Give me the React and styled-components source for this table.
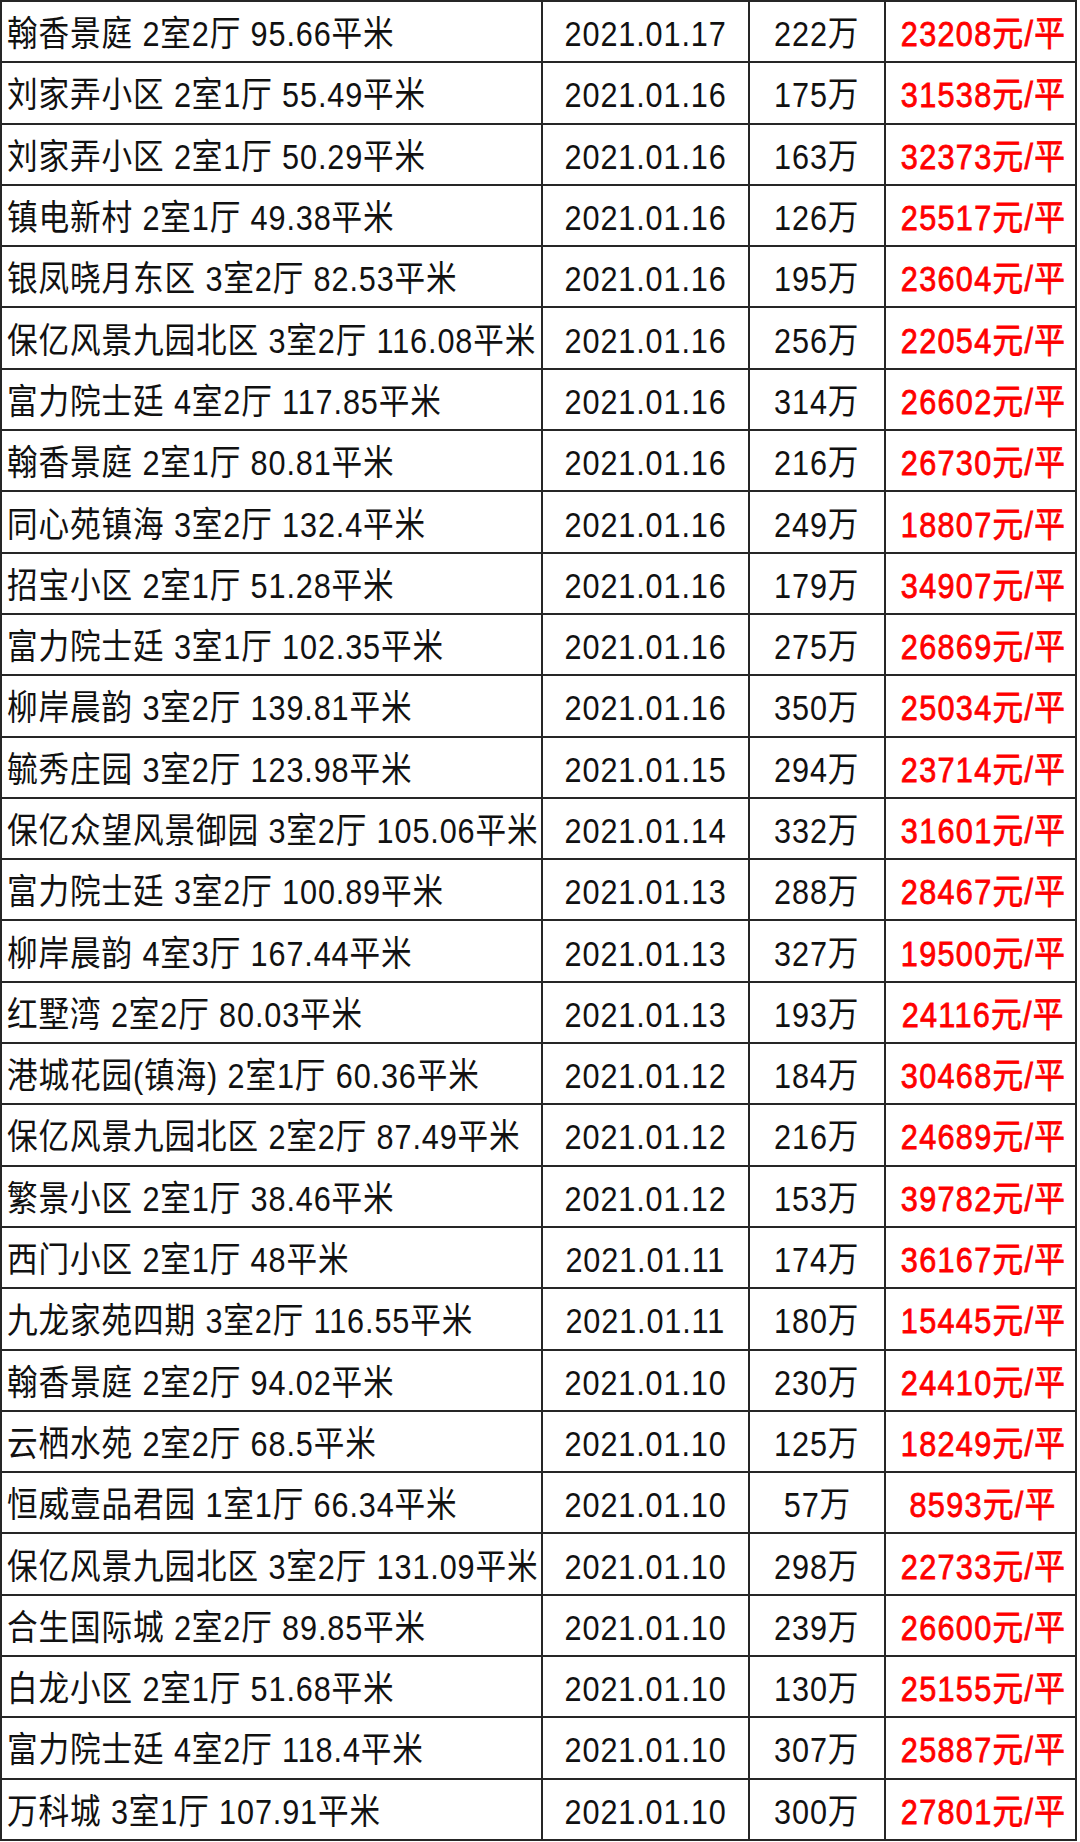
import React from "react";
import styled, { createGlobalStyle } from "styled-components";

const GlobalStyle = createGlobalStyle`
  html, body { margin: 0; padding: 0; background: #ffffff; }
  body { font-family: "Liberation Sans", "Noto Sans CJK SC", sans-serif; }
`;

const rows = [
  ["翰香景庭 2室2厅 95.66平米", "2021.01.17", "222万", "23208元/平"],
  ["刘家弄小区 2室1厅 55.49平米", "2021.01.16", "175万", "31538元/平"],
  ["刘家弄小区 2室1厅 50.29平米", "2021.01.16", "163万", "32373元/平"],
  ["镇电新村 2室1厅 49.38平米", "2021.01.16", "126万", "25517元/平"],
  ["银凤晓月东区 3室2厅 82.53平米", "2021.01.16", "195万", "23604元/平"],
  ["保亿风景九园北区 3室2厅 116.08平米", "2021.01.16", "256万", "22054元/平"],
  ["富力院士廷 4室2厅 117.85平米", "2021.01.16", "314万", "26602元/平"],
  ["翰香景庭 2室1厅 80.81平米", "2021.01.16", "216万", "26730元/平"],
  ["同心苑镇海 3室2厅 132.4平米", "2021.01.16", "249万", "18807元/平"],
  ["招宝小区 2室1厅 51.28平米", "2021.01.16", "179万", "34907元/平"],
  ["富力院士廷 3室1厅 102.35平米", "2021.01.16", "275万", "26869元/平"],
  ["柳岸晨韵 3室2厅 139.81平米", "2021.01.16", "350万", "25034元/平"],
  ["毓秀庄园 3室2厅 123.98平米", "2021.01.15", "294万", "23714元/平"],
  ["保亿众望风景御园 3室2厅 105.06平米", "2021.01.14", "332万", "31601元/平"],
  ["富力院士廷 3室2厅 100.89平米", "2021.01.13", "288万", "28467元/平"],
  ["柳岸晨韵 4室3厅 167.44平米", "2021.01.13", "327万", "19500元/平"],
  ["红墅湾 2室2厅 80.03平米", "2021.01.13", "193万", "24116元/平"],
  ["港城花园(镇海) 2室1厅 60.36平米", "2021.01.12", "184万", "30468元/平"],
  ["保亿风景九园北区 2室2厅 87.49平米", "2021.01.12", "216万", "24689元/平"],
  ["繁景小区 2室1厅 38.46平米", "2021.01.12", "153万", "39782元/平"],
  ["西门小区 2室1厅 48平米", "2021.01.11", "174万", "36167元/平"],
  ["九龙家苑四期 3室2厅 116.55平米", "2021.01.11", "180万", "15445元/平"],
  ["翰香景庭 2室2厅 94.02平米", "2021.01.10", "230万", "24410元/平"],
  ["云栖水苑 2室2厅 68.5平米", "2021.01.10", "125万", "18249元/平"],
  ["恒威壹品君园 1室1厅 66.34平米", "2021.01.10", "57万", "8593元/平"],
  ["保亿风景九园北区 3室2厅 131.09平米", "2021.01.10", "298万", "22733元/平"],
  ["合生国际城 2室2厅 89.85平米", "2021.01.10", "239万", "26600元/平"],
  ["白龙小区 2室1厅 51.68平米", "2021.01.10", "130万", "25155元/平"],
  ["富力院士廷 4室2厅 118.4平米", "2021.01.10", "307万", "25887元/平"],
  ["万科城 3室1厅 107.91平米", "2021.01.10", "300万", "27801元/平"],
];

const Table = styled.div`
  box-sizing: border-box;
  width: 1077px;
  height: 1841px;
  border: 2px solid #262626;
  display: flex;
  flex-direction: column;
  background: #ffffff;
`;

const Row = styled.div`
  box-sizing: border-box;
  flex: 1 1 0;
  display: grid;
  grid-template-columns: 539px 207px 136px 197px;
  border-top: ${(p) => (p.$first ? "none" : "2px solid #262626")};
  min-height: 0;
`;

const Cell = styled.div`
  box-sizing: border-box;
  display: flex;
  align-items: center;
  justify-content: ${(p) => (p.$left ? "flex-start" : "center")};
  padding-left: ${(p) => (p.$left ? "5px" : "0")};
  border-left: ${(p) => (p.$left ? "none" : "2px solid #262626")};
  overflow: visible;
  white-space: nowrap;
`;

const Text = styled.span`
  display: inline-block;
  font-size: 35px;
  line-height: 1;
  letter-spacing: ${(p) => (p.$red ? "1.5px" : "1px")};
  padding-top: 4px;
  color: ${(p) => (p.$red ? "#ff0000" : "#111111")};
  font-weight: 400;
  -webkit-text-stroke: ${(p) => (p.$red ? "0.8px #ff0000" : "0")};
  transform: scaleX(0.875);
  transform-origin: ${(p) => (p.$left ? "left center" : "center center")};
`;

export default function App() {
  return (
    <>
      <GlobalStyle />
      <Table>
        {rows.map((r, i) => (
          <Row key={i} $first={i === 0}>
            <Cell $left>
              <Text $left>{r[0]}</Text>
            </Cell>
            <Cell>
              <Text>{r[1]}</Text>
            </Cell>
            <Cell>
              <Text>{r[2]}</Text>
            </Cell>
            <Cell>
              <Text $red>{r[3]}</Text>
            </Cell>
          </Row>
        ))}
      </Table>
    </>
  );
}
